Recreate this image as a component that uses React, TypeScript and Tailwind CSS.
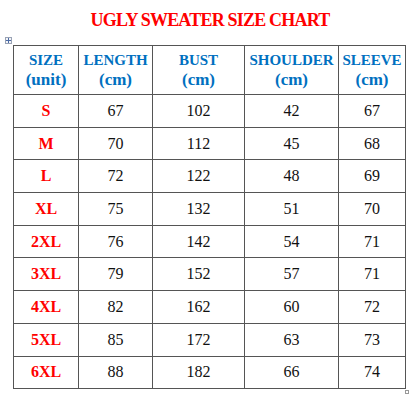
const rows = [
  ['S', 67, 102, 42, 67],
  ['M', 70, 112, 45, 68],
  ['L', 72, 122, 48, 69],
  ['XL', 75, 132, 51, 70],
  ['2XL', 76, 142, 54, 71],
  ['3XL', 79, 152, 57, 71],
  ['4XL', 82, 162, 60, 72],
  ['5XL', 85, 172, 63, 73],
  ['6XL', 88, 182, 66, 74],
]

const headers = [
  ['SIZE', '(unit)'],
  ['LENGTH', '(cm)'],
  ['BUST', '(cm)'],
  ['SHOULDER', '(cm)'],
  ['SLEEVE', '(cm)'],
]

const widths = ['w-[65px]', 'w-[74px]', 'w-[92px]', 'w-[94px]', 'w-[67px]']

export default function App() {
  return (
    <div className="w-[416px] h-[404px] bg-white font-['Liberation_Serif',serif] relative">
      <h1 className="pt-[8px] pl-[4px] text-center text-[18px] tracking-[-0.8px] font-bold text-[#ff0000] leading-[24px]">
        UGLY SWEATER SIZE CHART
      </h1>
      <div className="relative mt-[13px] ml-[13px]">
        {/* table move handle */}
        <div className="absolute -left-[8px] -top-[8px] w-[7px] h-[7px] border border-[#9aa3b5] bg-[#f2f4f8] flex items-center justify-center">
          <svg width="5" height="5" viewBox="0 0 5 5">
            <path d="M2.5 0v5M0 2.5h5" stroke="#4a6aa5" strokeWidth="1" />
          </svg>
        </div>
        <table className="border-collapse border border-[#555]">
          <thead>
            <tr className="h-[49px]">
              {headers.map(([a, b], i) => (
                <th
                  key={a}
                  className={`${widths[i]} border border-[#555] text-[#0070c0] font-bold text-center p-0`}
                >
                  <div className="text-[15px] leading-[19px]">{a}</div>
                  <div className="text-[17px] leading-[20px]">{b}</div>
                </th>
              ))}
            </tr>
          </thead>
          <tbody>
            {rows.map((r) => (
              <tr key={r[0]} className="h-[32.7px]">
                {r.map((c, i) => (
                  <td
                    key={i}
                    className={`border border-[#555] text-center p-0 text-[16px] ${
                      i === 0 ? 'text-[#ff0000] font-bold' : 'text-[#111]'
                    }`}
                  >
                    {c}
                  </td>
                ))}
              </tr>
            ))}
          </tbody>
        </table>
        <div className="absolute left-[392px] bottom-[-5px] w-[4px] h-[4px] border border-[#999] bg-white" />
      </div>
    </div>
  )
}
